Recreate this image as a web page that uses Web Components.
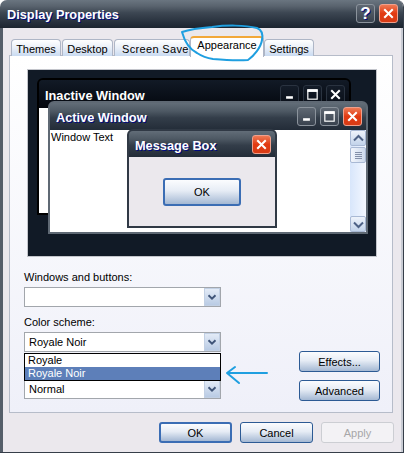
<!DOCTYPE html>
<html>
<head>
<meta charset="utf-8">
<style>
  html, body { margin: 0; background: #fff; }
  body { width: 404px; height: 463px; overflow: hidden; font: 11px "Liberation Sans", sans-serif; color: #000; }
</style>
</head>
<body>
<xp-dialog>
  <span slot="title">Display Properties</span>
  <caption-btn slot="buttons" kind="help"></caption-btn>
  <caption-btn slot="buttons" kind="close"></caption-btn>

  <xp-tab slot="tabs" w="50">Themes</xp-tab>
  <xp-tab slot="tabs" w="51">Desktop</xp-tab>
  <xp-tab slot="tabs" w="76" pad="7">Screen Saver</xp-tab>
  <xp-tab slot="tabs" w="74" active>Appearance</xp-tab>
  <xp-tab slot="tabs" w="50">Settings</xp-tab>

  <xp-preview></xp-preview>

  <xp-settings>
    <xp-combo label="Windows and buttons:"></xp-combo>
    <xp-combo label="Color scheme:" open>Royale Noir</xp-combo>
    <xp-combo label=" " gap="10">Normal</xp-combo>
    <xp-button slot="side" w="81">Effects...</xp-button>
    <xp-button slot="side" w="81">Advanced</xp-button>
  </xp-settings>

  <xp-button slot="footer" w="73" focused>OK</xp-button>
  <xp-button slot="footer" w="73">Cancel</xp-button>
  <xp-button slot="footer" w="73" disabled>Apply</xp-button>
</xp-dialog>

<script>
const ICONS = {
  min: '<rect x="6" y="12" width="8" height="3" fill="#fff"/>',
  max: '<rect x="4.5" y="4.5" width="11" height="11" fill="none" stroke="#fff" stroke-width="1.4"/><rect x="4" y="4" width="12" height="3" fill="#fff"/>',
  close: '<path d="M5 5L15 15M15 5L5 15" stroke="#fff" stroke-width="2.4" fill="none"/>',
};

class CaptionBtn extends HTMLElement {
  connectedCallback() {
    const kind = this.getAttribute("kind");
    const s = this.attachShadow({ mode: "open" });
    s.innerHTML = `
    <style>
    :host{
        display:block;
        width:19px;
        height:19px;
        box-sizing:border-box;
        border:1px solid #8b939c;
        border-radius:3px;
        background:linear-gradient(#5f6873,#39424e);
        color:#fff;
        font:bold 17px/17px "Liberation Sans",sans-serif;
        text-align:center;
        overflow:hidden;
    }
    :host([kind="close"]){
        border-color:#f0a08c;
        background:linear-gradient(#ee7a55,#e23a12 50%,#d83c16);
    }
    :host([flat]){
        border-color:#2a3340;
        background:linear-gradient(#141c28,#0a101a);
    }
    svg{display:block;width:17px;height:17px;}
    </style>
    ${kind === "help" ? "?" : `<svg viewBox="0 0 20 20">${ICONS[kind]}</svg>`}`;
  }
}
customElements.define("caption-btn", CaptionBtn);

class XpDialog extends HTMLElement {
  connectedCallback() {
    const s = this.attachShadow({ mode: "open" });
    s.innerHTML = `
    <style>
    :host{
        display:flex;
        flex-direction:column;
        position:relative;
        width:404px;
        height:453px;
        box-sizing:border-box;
        background:#ebe8ed;
        border:solid #363e49;
        border-width:0 1px 1px 0;
        border-radius:7px 7px 0 0;
        overflow:hidden;
    }
    #title{
        flex:none;
        height:28px;
        box-sizing:border-box;
        display:flex;
        align-items:center;
        padding:0 5px 0 7px;
        background:linear-gradient(#6a7580,#59636e 22%,#3d4753 45%,#27303c 80%,#1c242f);
        color:#fff;
        font:bold 12.75px "Liberation Sans",sans-serif;
        text-shadow:1px 1px 0 #000a80;
    }
    #title .grow{flex:1;}
    #buttons{display:flex;gap:4px;margin-top:-1px;}
    #body{
        flex:1;
        display:flex;
        flex-direction:column;
        border-left:3px solid #555e69;
        border-right:2px solid #c9ccd4;
        padding:10px 8px 0 6px;
        min-height:0;
    }
    #tabs{
        flex:none;
        display:flex;
        align-items:flex-end;
        gap:1px;
        height:18px;
        padding-left:2px;
        position:relative;
        z-index:1;
        margin-bottom:-1px;
    }
    #panel{
        flex:none;
        height:358px;
        box-sizing:border-box;
        border:1px solid #b6bcc9;
        background:linear-gradient(#fff,#eff0f9);
        padding:13px 15px 0 17px;
        display:flex;
        flex-direction:column;
    }
    #footer{
        flex:none;
        display:flex;
        justify-content:flex-end;
        gap:8px;
        padding-top:9px;
        margin-right:-1px;
    }
    #marks{position:absolute;left:0;top:0;width:404px;height:453px;pointer-events:none;z-index:5;}
    </style>
    <div id="title">
        <slot name="title"></slot>
        <span class="grow"></span>
        <div id="buttons"><slot name="buttons"></slot></div>
    </div>
    <div id="body">
        <div id="tabs"><slot name="tabs"></slot></div>
        <div id="panel"><slot></slot></div>
        <div id="footer"><slot name="footer"></slot></div>
    </div>
    <svg id="marks" viewBox="0 0 404 453">
        <g fill="none" stroke="#1f9fe0" stroke-width="2" stroke-linecap="round" stroke-linejoin="round">
            <path d="M182 32C188 30 200 28 212 27C226 25 245 25 257 28C262 30 263 35 262 40C261 47 254 56 248 60C236 61 224 60 213 59C206 58 200 55 197 53C191 50 185 43 182 32Z"/>
            <path d="M267 373H228M235 367L227 373L239 383"/>
        </g>
    </svg>`;
  }
}
customElements.define("xp-dialog", XpDialog);

class XpTab extends HTMLElement {
  connectedCallback() {
    const s = this.attachShadow({ mode: "open" });
    const pad = this.getAttribute("pad");
    s.innerHTML = `
    <style>
    :host{
        display:block;
        flex:none;
        height:17px;
        box-sizing:border-box;
        border:1px solid #aeb6c6;
        border-bottom:none;
        border-radius:4px 4px 0 0;
        background:linear-gradient(#fff,#e6edf7 55%,#c9dbf1);
        text-align:${pad ? "left" : "center"};
        padding-left:${pad || 0}px;
        line-height:18px;
        white-space:nowrap;
        overflow:hidden;
        font-size:11px;
        letter-spacing:${pad ? 0.35 : 0}px;
        width:${this.getAttribute("w")}px;
    }
    :host([active]){
        height:21px;
        margin:0 -1px -1px;
        position:relative;
        z-index:2;
        background:#fff;
        border-top:2px solid #f2a83a;
        line-height:15px;
    }
    </style>
    <slot></slot>`;
  }
}
customElements.define("xp-tab", XpTab);

class MiniWindow extends HTMLElement {
  connectedCallback() {
    const s = this.attachShadow({ mode: "open" });
    s.innerHTML = `
    <style>
    :host{
        display:flex;
        flex-direction:column;
        position:absolute;
        box-sizing:border-box;
        border:2px solid #5f6974;
        border-radius:6px 6px 0 0;
        background:#5f6974;
        overflow:hidden;
    }
    :host([variant="inactive"]){border-color:#000;background:#0a1019;}
    :host([variant="message"]){border-color:#303945;background:#303945;}
    #cap{
        flex:none;
        height:var(--cap,27px);
        box-sizing:border-box;
        display:flex;
        align-items:center;
        justify-content:space-between;
        padding:2px 4px 0 4px;
        background:linear-gradient(#626d78,#4e5964 30%,#333d49 55%,#232c38);
        color:#fff;
        font:bold 12.75px "Liberation Sans",sans-serif;
        text-shadow:1px 1px 0 #000a80;
    }
    :host([variant="inactive"]) #cap{background:linear-gradient(#121a26,#04070e);text-shadow:none;}
    #btns{display:flex;gap:4px;margin-top:-2px;}
    #client{flex:1;min-height:0;display:flex;background:var(--client,#fff);}
    </style>
    <div id="cap"><slot name="title"></slot><div id="btns"><slot name="buttons"></slot></div></div>
    <div id="client"><slot></slot></div>`;
  }
}
customElements.define("mini-window", MiniWindow);

class XpScrollbar extends HTMLElement {
  connectedCallback() {
    const s = this.attachShadow({ mode: "open" });
    const chev = (d) => `<svg viewBox="0 0 15 15" width="15" height="15"><path d="${d}" fill="none" stroke="#4d6185" stroke-width="2"/></svg>`;
    s.innerHTML = `
    <style>
    :host{
        display:flex;
        flex-direction:column;
        width:16px;
        flex:none;
        background:linear-gradient(90deg,#d8e6fb,#f3f7ff);
    }
    .b{
        height:16px;
        box-sizing:border-box;
        border:1px solid #a9b9d4;
        border-radius:2px;
        background:linear-gradient(#eef3fb,#c2d3ea);
    }
    .thumb{
        height:16px;
        margin-top:1px;
        display:flex;
        flex-direction:column;
        justify-content:center;
        gap:1px;
        align-items:center;
        box-sizing:border-box;
        border:1px solid #a9b9d4;
        border-radius:2px;
        background:linear-gradient(90deg,#f3f6fc,#ccd9ec);
    }
    .thumb i{display:block;width:7px;height:1px;background:#8490a8;}
    .sp{flex:1;}
    svg{display:block;}
    </style>
    <div class="b">${chev("M3 9.5L7.5 5L12 9.5")}</div>
    <div class="thumb"><i></i><i></i><i></i><i></i></div>
    <div class="sp"></div>
    <div class="b">${chev("M3 5.5L7.5 10L12 5.5")}</div>`;
  }
}
customElements.define("xp-scrollbar", XpScrollbar);

class XpPreview extends HTMLElement {
  connectedCallback() {
    const s = this.attachShadow({ mode: "open" });
    s.innerHTML = `
    <style>
    :host{
        display:block;
        flex:none;
        position:relative;
        width:350px;
        height:188px;
        box-sizing:border-box;
        border:1px solid #c3c5cb;
        background:#111a26;
    }
    .inactive{left:9px;top:8px;width:314px;height:137px;--cap:28px;}
    .inactive .slab{flex:1;margin:0 0 2px 0;background:#fff;}
    .active{left:20px;top:31px;width:320px;height:133px;--cap:27px;}
    .active .txt{flex:1;font-size:11px;padding:0 0 0 1px;line-height:14px;}
    .msg{left:99px;top:59px;width:150px;height:99px;--cap:26px;--client:#ebe8ed;}
    .msg .mid{flex:1;display:flex;justify-content:center;padding-top:21px;}
    .ina{margin-left:2px;}
    </style>
    <mini-window class="inactive" variant="inactive">
        <span slot="title" class="ina">Inactive Window</span>
        <caption-btn slot="buttons" kind="min" flat></caption-btn>
        <caption-btn slot="buttons" kind="max" flat></caption-btn>
        <caption-btn slot="buttons" kind="close" flat></caption-btn>
        <div class="slab"></div>
    </mini-window>
    <mini-window class="active">
        <span slot="title" class="ina">Active Window</span>
        <caption-btn slot="buttons" kind="min"></caption-btn>
        <caption-btn slot="buttons" kind="max"></caption-btn>
        <caption-btn slot="buttons" kind="close"></caption-btn>
        <div class="txt">Window Text</div>
        <xp-scrollbar></xp-scrollbar>
    </mini-window>
    <mini-window class="msg" variant="message">
        <span slot="title" class="ina">Message Box</span>
        <caption-btn slot="buttons" kind="close"></caption-btn>
        <div class="mid"><xp-button w="78" h="28" focused>OK</xp-button></div>
    </mini-window>`;
  }
}
customElements.define("xp-preview", XpPreview);

class XpSettings extends HTMLElement {
  connectedCallback() {
    const s = this.attachShadow({ mode: "open" });
    s.innerHTML = `
    <style>
    :host{
        display:flex;
        justify-content:space-between;
        align-items:flex-end;
        flex:none;
        padding-top:13px;
        margin-left:-3px;
        width:356px;
    }
    #left{width:197px;display:flex;flex-direction:column;}
    #side{display:flex;flex-direction:column;gap:8px;margin-bottom:-2px;}
    </style>
    <div id="left"><slot></slot></div>
    <div id="side"><slot name="side"></slot></div>`;
  }
}
customElements.define("xp-settings", XpSettings);

class XpCombo extends HTMLElement {
  connectedCallback() {
    const s = this.attachShadow({ mode: "open" });
    const open = this.hasAttribute("open");
    s.innerHTML = `
    <style>
    :host{display:block;position:relative;}
    #label{height:14px;line-height:14px;margin-bottom:3px;font-size:11px;margin-top:${this.getAttribute("gap") || 8}px;white-space:pre;}
    :host(:first-child) #label{margin-top:0;}
    #box{
        height:20px;
        box-sizing:border-box;
        border:1px solid #a2a6ac;
        background:#fff;
        display:flex;
        align-items:center;
        justify-content:space-between;
        padding-left:4px;
        font-size:11px;
    }
    #arrow{
        width:16px;
        height:18px;
        box-sizing:border-box;
        border:1px solid #c2d0e4;
        background:linear-gradient(#e3ebf7,#b9cbe4);
        display:block;
    }
    #list{
        position:absolute;
        left:0;
        right:0;
        top:46px;
        z-index:3;
        box-sizing:border-box;
        border:1px solid #000;
        background:#fff;
        font-size:11px;
        line-height:13px;
    }
    #list div{height:13px;padding-left:3px;}
    #list .sel{background:#5d7fb9;color:#fff;}
    </style>
    <div id="label">${this.getAttribute("label")}</div>
    <div id="box">
        <span><slot></slot></span>
        <svg id="arrow" viewBox="0 0 16 18"><path d="M4 7L8 11L12 7" fill="none" stroke="#3f5478" stroke-width="2.2"/></svg>
    </div>
    ${open ? `<div id="list"><div>Royale</div><div class="sel">Royale Noir</div></div>` : ""}`;
  }
}
customElements.define("xp-combo", XpCombo);

class XpButton extends HTMLElement {
  connectedCallback() {
    const s = this.attachShadow({ mode: "open" });
    s.innerHTML = `
    <style>
    :host{
        display:flex;
        align-items:center;
        justify-content:center;
        flex:none;
        box-sizing:border-box;
        width:${this.getAttribute("w")}px;
        height:${this.getAttribute("h") || 21}px;
        border:1px solid #2c5a94;
        border-radius:3px;
        background:linear-gradient(#fbfcfe,#e6ecf5 45%,#a4b8d3);
        font-size:11px;
        color:#000;
    }
    :host([focused]){
        border:2px solid #3b6db4;
    }
    :host([disabled]){
        border-color:#ccced3;
        background:#f3f2f5;
        color:#a7a6a8;
    }
    </style>
    <slot></slot>`;
  }
}
customElements.define("xp-button", XpButton);
</script>
</body>
</html>
